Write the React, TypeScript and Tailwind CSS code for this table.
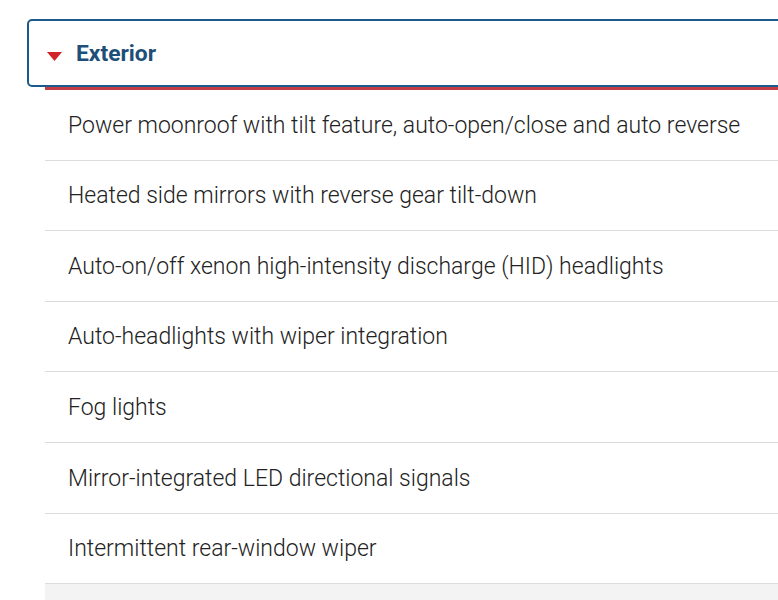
const features = [
  'Power moonroof with tilt feature, auto-open/close and auto reverse',
  'Heated side mirrors with reverse gear tilt-down',
  'Auto-on/off xenon high-intensity discharge (HID) headlights',
  'Auto-headlights with wiper integration',
  'Fog lights',
  'Mirror-integrated LED directional signals',
  'Intermittent rear-window wiper',
]

export default function App() {
  return (
    <div
      className="w-full h-[600px] overflow-hidden bg-white pl-[27px] pt-[19px]"
      style={{ fontFamily: 'Roboto, "Liberation Sans", sans-serif' }}
    >
      <div className="w-[820px]">
        <button className="flex h-[68px] w-full items-center gap-[14px] rounded-[5px] border-2 border-[#1d5a8c] bg-white pl-[18px] text-left">
          <svg width="15" height="9" viewBox="0 0 15 9" className="mt-[6px]">
            <path d="M0 0 H15 L7.5 9 Z" fill="#d2232a" />
          </svg>
          <span className="mt-[2px] text-[22.8px] font-bold text-[#1d4f78]">Exterior</span>
        </button>
        <div className="ml-[18px] h-[3px] bg-[#c33d44]" />
        <ul className="ml-[18px]">
          {features.map((f) => (
            <li
              key={f}
              className="flex h-[70.6px] items-center border-b border-[#dcdcdc] pl-[23px] pt-[2px] text-[23px] font-light text-[#222]"
            >
              {f}
            </li>
          ))}
          <li className="h-[40px] bg-[#f3f3f3]" />
        </ul>
      </div>
    </div>
  )
}
